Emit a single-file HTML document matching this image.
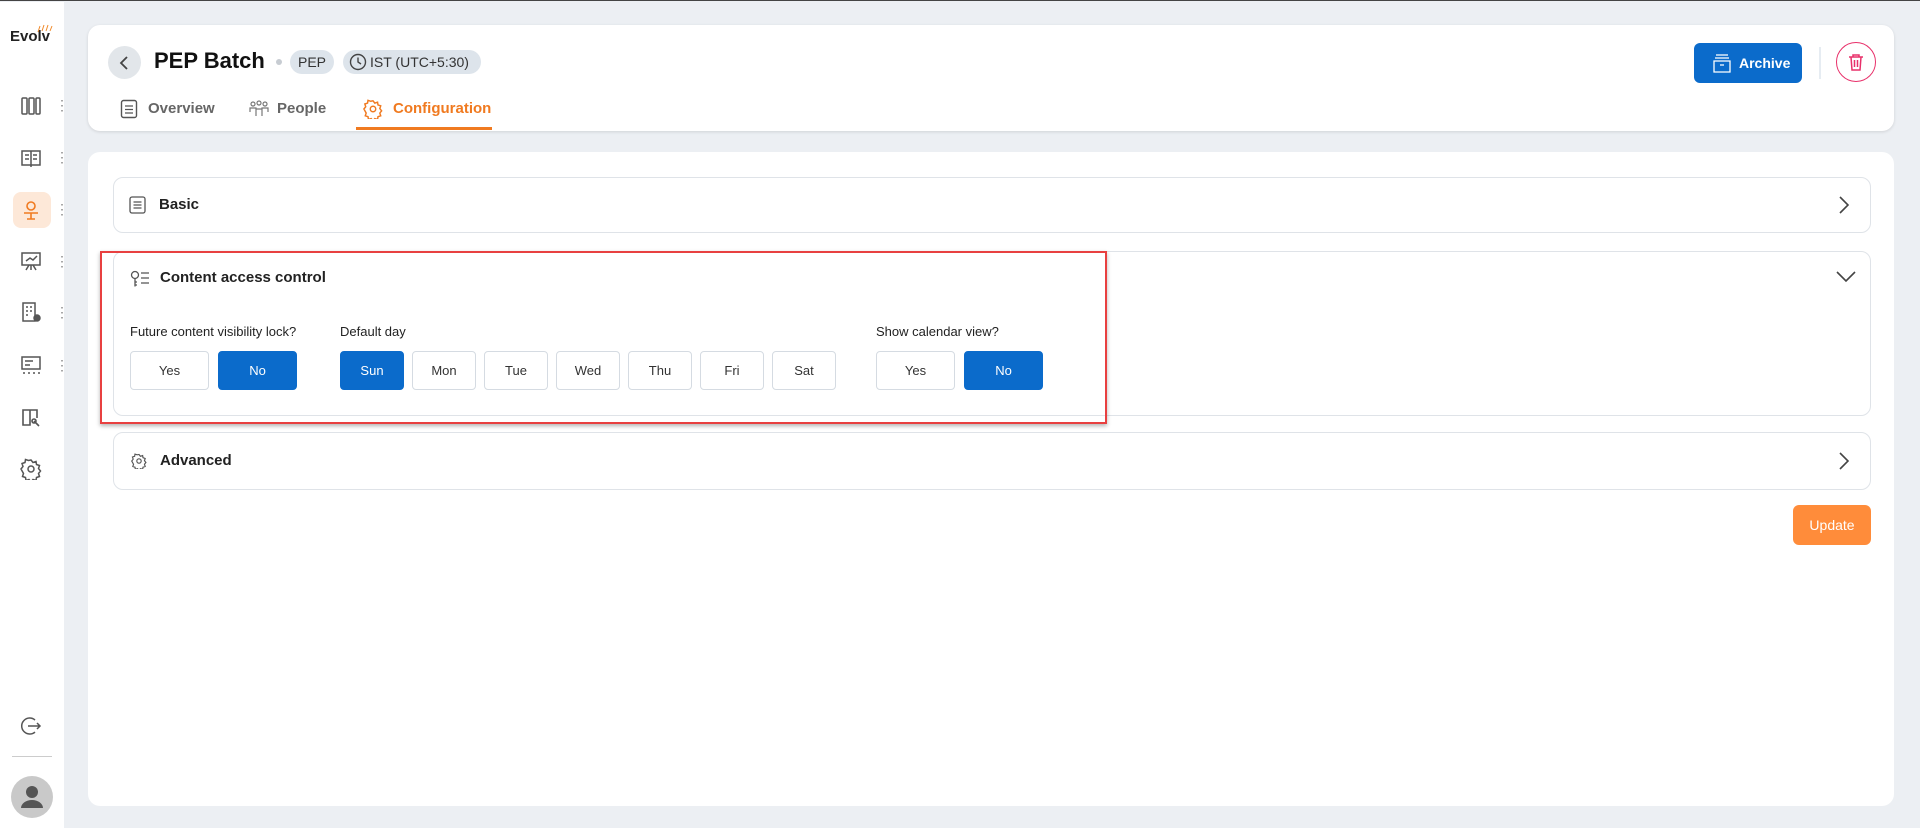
<!DOCTYPE html>
<html><head><meta charset="utf-8"><style>
*{box-sizing:border-box;margin:0;padding:0}
body{width:1920px;height:827px;overflow:hidden;background:#eceff3;font-family:"Liberation Sans",sans-serif;color:#222;position:relative;border-top:1px solid #444}
.abs{position:absolute}
.side{left:0;top:1px;width:64px;height:826px;background:#fff}
.card{background:#fff;border-radius:12px}
.panel{position:absolute;left:113px;width:1758px;border:1px solid #dfe3e8;border-radius:10px;background:#fff}
.ptitle{position:absolute;font-weight:bold;font-size:15px;color:#222}
.btn{position:absolute;top:350px;height:39px;border:1px solid #d5dbe2;border-radius:4px;background:#fff;font-size:13px;color:#333;display:flex;align-items:center;justify-content:center}
.on{background:#0b6bcb;border-color:#0b6bcb;color:#fff}
.lbl{position:absolute;top:323px;font-size:13px;color:#222}
.sic{position:absolute;left:20px;width:22px;height:22px}
.dots{position:absolute;left:55px;width:3px;font-size:14px;color:#888;line-height:5px}
</style></head><body>
<div class="abs side"></div>
<div class="abs" style="left:10px;top:27px;font-size:15px;font-weight:bold;color:#222">Evolv</div>
<svg class="abs" style="left:36px;top:22px" width="18" height="10"><path d="M2 9 L4 3 M6 8 L8 2 M10 8 L12 2 M14 8 L16 3" stroke="#f08a2a" stroke-width="1"/></svg>
<svg class="sic" style="top:94px" viewBox="0 0 22 22" fill="none" stroke="#555" stroke-width="1.5"><rect x="2" y="3" width="5" height="16" rx="1"/><rect x="9" y="3" width="5" height="16" rx="1"/><rect x="16" y="3" width="4" height="16" rx="1"/></svg>
<div class="dots" style="top:102px">⋮</div>
<svg class="sic" style="top:146px" viewBox="0 0 22 22" fill="none" stroke="#555" stroke-width="1.5"><rect x="2" y="4" width="18" height="14"/><path d="M11 4v16M5 8h4M13 8h4M5 12h4M13 12h4"/></svg>
<div class="dots" style="top:154px">⋮</div>
<div class="abs" style="left:13px;top:191px;width:38px;height:36px;border-radius:8px;background:#fde8d8"></div>
<svg class="sic" style="top:198px" viewBox="0 0 22 22" fill="none" stroke="#f07a20" stroke-width="1.6"><circle cx="11" cy="7" r="4"/><path d="M4 14h14M11 14v6M7 20h8"/></svg>
<div class="dots" style="top:206px">⋮</div>
<svg class="sic" style="top:249px" viewBox="0 0 22 22" fill="none" stroke="#555" stroke-width="1.5"><rect x="2" y="3" width="18" height="12"/><path d="M11 15v5M6 20l3-5M16 20l-3-5M6 11l4-3 3 2 4-4"/></svg>
<div class="dots" style="top:258px">⋮</div>
<svg class="sic" style="top:300px" viewBox="0 0 22 22" fill="none" stroke="#555" stroke-width="1.5"><rect x="3" y="2" width="12" height="18"/><path d="M6 6h2M10 6h2M6 10h2M10 10h2M6 14h2"/><circle cx="17" cy="17" r="3" fill="#555"/></svg>
<div class="dots" style="top:309px">⋮</div>
<svg class="sic" style="top:353px" viewBox="0 0 22 22" fill="none" stroke="#555" stroke-width="1.5"><rect x="2" y="3" width="18" height="12"/><path d="M5 7h8M5 11h5M3 19h2M8 19h2M13 19h2M18 19h2"/></svg>
<div class="dots" style="top:362px">⋮</div>
<svg class="sic" style="top:405px" viewBox="0 0 22 22" fill="none" stroke="#555" stroke-width="1.6"><path d="M3 4h7v15H3zM10 4h7v8M14 15l5 5"/><circle cx="14" cy="15" r="2"/></svg>
<svg class="sic" style="top:457px" viewBox="0 0 22 22" fill="none" stroke="#555" stroke-width="1.5"><circle cx="11" cy="11" r="3"/><path d="M11 2l2 2.5 3-1 .5 3 3 1-1 3 2 2.5-2 2.5 1 3-3 1-.5 3-3-1-2 2.5-2-2.5-3 1-.5-3-3-1 1-3L1 11l2-2.5-1-3 3-1 .5-3 3 1z"/></svg>
<svg class="sic" style="top:714px" viewBox="0 0 22 22" fill="none" stroke="#555" stroke-width="1.5"><path d="M15 5a8 8 0 1 0 0 12"/><path d="M8 11h12M17 8l3 3-3 3"/></svg>
<div class="abs" style="left:12px;top:755px;width:40px;height:1px;background:#ccc"></div>
<svg class="abs" style="left:11px;top:775px" width="42" height="42" viewBox="0 0 42 42"><circle cx="21" cy="21" r="21" fill="#c9c9c9"/><circle cx="21" cy="16" r="6" fill="#555"/><path d="M10 32a11 8 0 0 1 22 0z" fill="#555"/></svg>

<div class="abs card" style="left:88px;top:24px;width:1806px;height:106px;box-shadow:0 1px 3px rgba(0,0,0,.12)"></div>
<div class="abs" style="left:108px;top:45px;width:33px;height:33px;border-radius:50%;background:#e2e6ea"></div>
<svg class="abs" style="left:118px;top:54px" width="14" height="16"><path d="M9 2L3 8l6 6" stroke="#444" stroke-width="1.8" fill="none"/></svg>
<div class="abs" style="left:154px;top:47px;font-size:22px;font-weight:bold;color:#111">PEP Batch</div>
<div class="abs" style="left:276px;top:58px;width:6px;height:6px;border-radius:50%;background:#c7ccd2"></div>
<div class="abs" style="left:290px;top:49px;width:44px;height:24px;border-radius:12px;background:#dde4eb;font-size:14px;line-height:24px;text-align:center;color:#333">PEP</div>
<div class="abs" style="left:343px;top:49px;width:138px;height:24px;border-radius:12px;background:#dde4eb;font-size:14px;line-height:24px;color:#333;padding-left:27px">IST (UTC+5:30)</div>
<svg class="abs" style="left:349px;top:52px" width="18" height="18"><circle cx="9" cy="9" r="7.5" stroke="#444" stroke-width="1.4" fill="none"/><path d="M9 4.5V9l3 2" stroke="#444" stroke-width="1.4" fill="none"/></svg>
<svg class="abs" style="left:120px;top:98px" width="18" height="20"><rect x="1.5" y="1.5" width="15" height="17" rx="2" stroke="#555" stroke-width="1.4" fill="none"/><path d="M5 7h8M5 10.5h8M5 14h8" stroke="#555" stroke-width="1.3"/></svg>
<div class="abs" style="left:148px;top:99px;font-size:15px;font-weight:bold;color:#666">Overview</div>
<svg class="abs" style="left:249px;top:98px" width="20" height="20" fill="none" stroke="#777" stroke-width="1.2"><circle cx="4" cy="5" r="2"/><circle cx="10" cy="4" r="2"/><circle cx="16" cy="5" r="2"/><path d="M1 13v-4h6v4M7 17v-7h6v7M13 13V9h6v4"/></svg>
<div class="abs" style="left:277px;top:99px;font-size:15px;font-weight:bold;color:#666">People</div>
<svg class="abs" style="left:363px;top:98px" width="20" height="20" viewBox="0 0 22 22" fill="none" stroke="#f07a20" stroke-width="1.6"><circle cx="11" cy="11" r="3"/><path d="M11 2l2 2.5 3-1 .5 3 3 1-1 3 2 2.5-2 2.5 1 3-3 1-.5 3-3-1-2 2.5-2-2.5-3 1-.5-3-3-1 1-3L1 11l2-2.5-1-3 3-1 .5-3 3 1z"/></svg>
<div class="abs" style="left:393px;top:99px;font-size:15px;font-weight:bold;color:#f07a20">Configuration</div>
<div class="abs" style="left:356px;top:126px;width:136px;height:3px;background:#f07a20"></div>
<div class="abs" style="left:1694px;top:42px;width:108px;height:40px;border-radius:6px;background:#0b6bcb;color:#fff;font-size:14px;font-weight:bold;line-height:40px;padding-left:45px">Archive</div>
<svg class="abs" style="left:1713px;top:52px" width="18" height="20" fill="none" stroke="#fff" stroke-width="1.3"><path d="M3 2h12M2 5h14M1 8h16v11H1zM7 12h4"/></svg>
<div class="abs" style="left:1819px;top:46px;width:2px;height:32px;background:#e6ecf2"></div>
<div class="abs" style="left:1836px;top:41px;width:40px;height:40px;border-radius:50%;border:1.5px solid #e8306a"></div>
<svg class="abs" style="left:1848px;top:52px" width="16" height="18" fill="none" stroke="#e8306a" stroke-width="1.5"><path d="M1 4h14M5 4V2h6v2M3 4l1 13h8l1-13M6.5 7v7M9.5 7v7"/></svg>

<div class="abs card" style="left:88px;top:151px;width:1806px;height:654px"></div>
<div class="panel" style="top:176px;height:56px"></div>
<svg class="abs" style="left:129px;top:195px" width="17" height="18"><rect x="1" y="1" width="15" height="16" rx="2" stroke="#555" stroke-width="1.3" fill="none"/><path d="M4.5 6h8M4.5 9h8M4.5 12h8" stroke="#555" stroke-width="1.2"/></svg>
<div class="ptitle" style="left:159px;top:195px">Basic</div>
<svg class="abs" style="left:1838px;top:194px" width="12" height="20"><path d="M2 2l8 8-8 8" stroke="#444" stroke-width="1.6" fill="none"/></svg>

<div class="panel" style="top:250px;height:165px"></div>
<svg class="abs" style="left:130px;top:269px" width="20" height="18" fill="none" stroke="#555" stroke-width="1.3"><circle cx="5" cy="5" r="3.5"/><path d="M5 8.5v8M5 12h2M5 15h2M11 3h8M11 8h8M11 13h8"/></svg>
<div class="ptitle" style="left:160px;top:268px">Content access control</div>
<svg class="abs" style="left:1836px;top:270px" width="20" height="12"><path d="M1 1l9 9 9-9" stroke="#444" stroke-width="1.6" fill="none"/></svg>
<div class="lbl" style="left:130px">Future content visibility lock?</div>
<div class="lbl" style="left:340px">Default day</div>
<div class="lbl" style="left:876px">Show calendar view?</div>
<div class="btn" style="left:130px;width:79px">Yes</div>
<div class="btn on" style="left:218px;width:79px">No</div>
<div class="btn on" style="left:340px;width:64px">Sun</div>
<div class="btn" style="left:412px;width:64px">Mon</div>
<div class="btn" style="left:484px;width:64px">Tue</div>
<div class="btn" style="left:556px;width:64px">Wed</div>
<div class="btn" style="left:628px;width:64px">Thu</div>
<div class="btn" style="left:700px;width:64px">Fri</div>
<div class="btn" style="left:772px;width:64px">Sat</div>
<div class="btn" style="left:876px;width:79px">Yes</div>
<div class="btn on" style="left:964px;width:79px">No</div>
<div class="abs" style="left:100px;top:250px;width:1007px;height:173px;border:2.5px solid #e84040;box-shadow:0 2px 4px rgba(0,0,0,.3)"></div>

<div class="panel" style="top:431px;height:58px"></div>
<svg class="abs" style="left:131px;top:452px" width="16" height="16" viewBox="0 0 22 22" fill="none" stroke="#555" stroke-width="1.6"><circle cx="11" cy="11" r="3"/><path d="M11 2l2 2.5 3-1 .5 3 3 1-1 3 2 2.5-2 2.5 1 3-3 1-.5 3-3-1-2 2.5-2-2.5-3 1-.5-3-3-1 1-3L1 11l2-2.5-1-3 3-1 .5-3 3 1z"/></svg>
<div class="ptitle" style="left:160px;top:451px">Advanced</div>
<svg class="abs" style="left:1838px;top:450px" width="12" height="20"><path d="M2 2l8 8-8 8" stroke="#444" stroke-width="1.6" fill="none"/></svg>
<div class="abs" style="left:1793px;top:504px;width:78px;height:40px;border-radius:6px;background:#ff8c3a;color:#fff;font-size:14px;line-height:40px;text-align:center">Update</div>
</body></html>
